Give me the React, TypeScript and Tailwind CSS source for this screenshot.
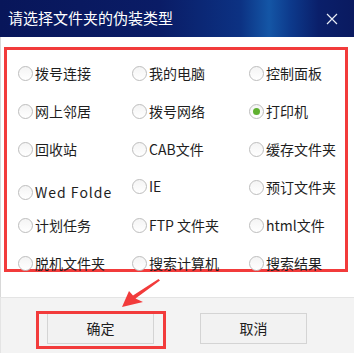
const font = "font-['Microsoft_YaHei','Noto_Sans_CJK_SC',sans-serif]";

type Opt = { label: string; checked?: boolean; shift?: string; wide?: boolean };

const options: Opt[] = [
  { label: "拨号连接" },
  { label: "我的电脑" },
  { label: "控制面板" },
  { label: "网上邻居" },
  { label: "拨号网络" },
  { label: "打印机", checked: true },
  { label: "回收站" },
  { label: "CAB文件" },
  { label: "缓存文件夹" },
  { label: "Wed Folde", shift: "translate-y-[5px]", wide: true },
  { label: "IE", shift: "-translate-y-[1px]" },
  { label: "预订文件夹" },
  { label: "计划任务" },
  { label: "FTP 文件夹" },
  { label: "html文件" },
  { label: "脱机文件夹" },
  { label: "搜索计算机" },
  { label: "搜索结果" },
];

function Radio({ opt }: { opt: Opt }) {
  return (
    <div className={`flex h-[38px] items-center ${opt.shift ?? ""}`}>
      <span className="flex h-[15px] w-[15px] shrink-0 items-center justify-center rounded-full border border-[#bdbdbd] bg-[linear-gradient(180deg,#f4f4f4,#ffffff)]">
        {opt.checked ? <span className="h-[7px] w-[7px] rounded-full bg-[#5fb030]" /> : null}
      </span>
      <span className={`ml-[2px] text-[14px] text-[#1e1e1e] ${opt.wide ? "tracking-[1px]" : ""}`}>{opt.label}</span>
    </div>
  );
}

export default function App() {
  return (
    <div className={`relative h-[357px] w-[360px] overflow-hidden bg-white ${font}`}>
      <div className="flex w-[354px] flex-col">
        <div className="flex h-[37px] items-center justify-between bg-[linear-gradient(90deg,#08165a_0%,#0a1c66_45%,#0c3283_68%,#1456a6_76%,#0d3a8c_82%,#0a1f6a_90%,#0a1a60_100%)] pl-[8px] pr-[14px]">
          <span className="text-[15px] text-white">请选择文件夹的伪装类型</span>
          <svg width="12" height="12" viewBox="0 0 12 12" className="mr-[2px]">
            <path d="M1 1L11 11M11 1L1 11" stroke="#e8ecf5" strokeWidth="1.2" />
          </svg>
        </div>
        <div className="h-[260px] border-l border-[#d8d8d8] bg-white pt-[10px]">
          <div className="ml-[3px] h-[225px] w-[344px] border-[3px] border-[#f23b3b] pl-[11px] pt-[4px]">
            <div className="grid grid-cols-[114px_117px_1fr]">
              {options.map((o) => (
                <Radio key={o.label} opt={o} />
              ))}
            </div>
          </div>
        </div>
        <div className="flex h-[56px] gap-[46px] border-l border-t border-[#e4e4e4] bg-[#f3f3f3] pl-[46px] pt-[15px]">
          <button className="h-[31px] w-[107px] border border-[#d4d4d4] bg-[#f2f2f2] text-[14px] text-[#1e1e1e]">确定</button>
          <button className="h-[31px] w-[107px] border border-[#d4d4d4] bg-[#f2f2f2] text-[14px] text-[#1e1e1e]">取消</button>
        </div>
      </div>
      <div className="absolute left-[36px] top-[311px] h-[38px] w-[130px] border-[3px] border-[#f23b3b]" />
      <svg className="absolute left-0 top-0" width="360" height="357" viewBox="0 0 360 357">
        <path d="M160 280.5 L135.5 298.5 L143 302 L122 307 L129 291 L133 295.5 L158.5 279 Z" fill="#f23b3b" />
      </svg>
    </div>
  );
}
